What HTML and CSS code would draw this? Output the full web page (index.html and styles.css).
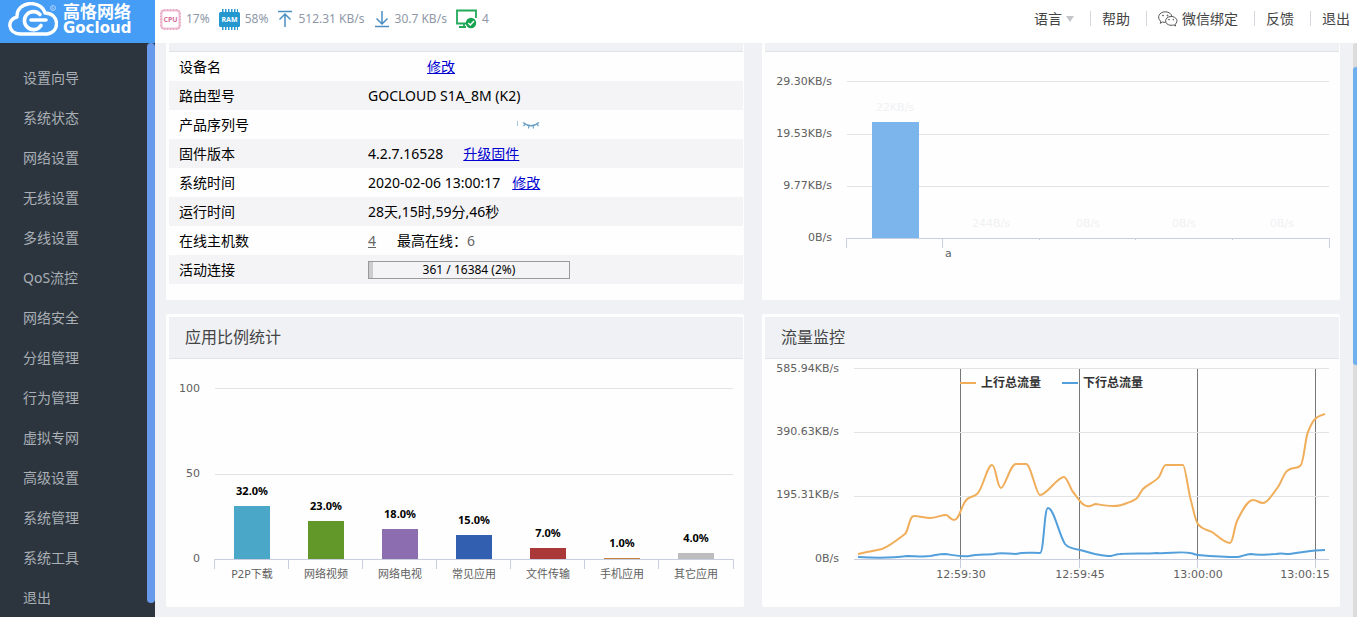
FILE: index.html
```html
<!DOCTYPE html>
<html lang="zh-CN">
<head>
<meta charset="utf-8">
<title>高恪网络</title>
<link rel="stylesheet" href="styles.css">
</head>
<body>
<header class="topbar">
  <div class="logo">
    <svg class="logo-mark" viewBox="0 0 50 36" width="50" height="36" aria-hidden="true">
      <path d="M12 32C-1 31-1 17 9 15C8-1 33-3 37 11C52 11 52 31 39 32Z" fill="none" stroke="#fff" stroke-width="3.4" stroke-linejoin="round"/>
      <path d="M32 12.500A9 9 0 1 0 33 23.500M23 18H38" fill="none" stroke="#fff" stroke-width="3.600" stroke-linecap="round"/>
      <circle cx="45" cy="6" r="2.500" fill="none" stroke="#a9d2fb" stroke-width="1"/>
      <path d="M44.300 7.500V5H45.500M45 6L46 7.500" fill="none" stroke="#a9d2fb" stroke-width=".7"/>
    </svg>
    <div class="logo-text"><span class="logo-cn">高恪网络</span><span class="logo-en">Gocloud</span></div>
  </div>
  <div class="stats">
    <span class="stat">
      <svg width="21" height="21" viewBox="0 0 21 21" aria-hidden="true">
        <rect x="1.500" y="1.500" width="18" height="18" rx="3" fill="#fff" stroke="#f0bfd4" stroke-width="2"/>
        <rect x=".8" y=".8" width="19.400" height="19.400" rx="3" fill="none" stroke="#dd8fb3" stroke-width="1" stroke-dasharray="1.500 1.500"/>
        <text class="chip cpu" x="10.500" y="13">CPU</text>
      </svg>17%</span>
    <span class="stat">
      <svg width="21" height="21" viewBox="0 0 21 21" aria-hidden="true">
        <path d="M3 1.500H19M3 19.500H19" stroke="#2a9ad0" stroke-width="3" stroke-dasharray="1.500 1.500"/>
        <rect y="3" width="21" height="15" rx="1.500" fill="#2497cf"/>
        <text class="chip ram" x="10.500" y="13">RAM</text>
      </svg>58%</span>
    <span class="stat">
      <svg width="16" height="18" viewBox="0 0 16 18" fill="none" stroke="#4b8fc2" stroke-width="1.500" aria-hidden="true"><path d="M1 1.500H15M8 17V4M2.500 9.500L8 4L13.500 9.500"/></svg>512.31 KB/s</span>
    <span class="stat">
      <svg width="16" height="18" viewBox="0 0 16 18" fill="none" stroke="#4b8fc2" stroke-width="1.500" aria-hidden="true"><path d="M1 16.500H15M8 1V14M2.500 8.500L8 14L13.500 8.500"/></svg>30.7 KB/s</span>
    <span class="stat">
      <svg width="21" height="20" viewBox="0 0 21 20" aria-hidden="true">
        <path d="M10 14.500H1V1.500H20V9M8 14.500V17M3 18H10" fill="none" stroke="#22a95a" stroke-width="1.800"/>
        <circle cx="15" cy="14" r="5.200" fill="#16a34f"/>
        <path d="M12.300 14L14.300 16L18 12" fill="none" stroke="#fff" stroke-width="1.400"/>
      </svg>4</span>
  </div>
  <nav class="links">
    <a href="#">语言<svg width="8" height="6" viewBox="0 0 8 6" aria-hidden="true"><path d="M0 0H8L4 6Z" fill="#c3c4c8"/></svg></a>
    <a href="#">帮助</a>
    <a href="#"><svg width="20" height="16" viewBox="0 0 20 16" fill="none" stroke="#555" stroke-width="1" aria-hidden="true">
      <path d="M7.500 11.300C6.500 11.500 5.400 11.300 4.500 11L2.300 12.300L2.700 10.200C-1.500 7 1 .8 7.300.8C11 .8 13.500 3 13.800 5.500"/>
      <path d="M13 5.500C6 5.700 5.700 14 13 14.300C14 14.400 15 14.200 15.700 13.900L17.600 15L17.200 13.200C20.800 10.400 18.600 5.500 13 5.500Z"/>
      <circle cx="5" cy="4.500" r=".5"/><circle cx="9.500" cy="4.500" r=".5"/><circle cx="11" cy="8.700" r=".4"/><circle cx="15.300" cy="8.700" r=".4"/>
    </svg>微信绑定</a>
    <a href="#">反馈</a>
    <a href="#">退出</a>
  </nav>
</header>
<div class="body">
  <aside class="sidebar">
    <nav class="menu">
      <a href="#">设置向导</a><a href="#">系统状态</a><a href="#">网络设置</a><a href="#">无线设置</a><a href="#">多线设置</a><a href="#">QoS流控</a><a href="#">网络安全</a><a href="#">分组管理</a><a href="#">行为管理</a><a href="#">虚拟专网</a><a href="#">高级设置</a><a href="#">系统管理</a><a href="#">系统工具</a><a href="#">退出</a>
    </nav>
    <div class="menu-track"><div class="menu-thumb"></div></div>
  </aside>
  <main class="content">
    <section class="panel cut">
      <div class="strip"></div>
      <table class="info">
        <tr><th scope="row">设备名</th><td><a class="after-name" href="#">修改</a></td></tr>
        <tr><th scope="row">路由型号</th><td>GOCLOUD S1A_8M (K2)</td></tr>
        <tr><th scope="row">产品序列号</th><td><button class="eye" aria-label="显示"><svg width="24" height="8" viewBox="0 0 24 8" fill="none" stroke="#6aa0c2" aria-hidden="true"><path d="M1.500 0V5" stroke="#a6c8dc"/><path d="M7 1.500Q15 8 23 1.500" stroke-width="1.500"/><path d="M9.500 3L7.500 5M13 4.500L12.500 7.500M17 4.500L17.500 7.500M20.500 3L22.500 5" stroke-width="1.200"/></svg></button></td></tr>
        <tr><th scope="row">固件版本</th><td>4.2.7.16528<a class="after-version" href="#">升级固件</a></td></tr>
        <tr><th scope="row">系统时间</th><td>2020-02-06 13:00:17<a class="after-time" href="#">修改</a></td></tr>
        <tr><th scope="row">运行时间</th><td>28天,15时,59分,46秒</td></tr>
        <tr><th scope="row">在线主机数</th><td><a class="hosts" href="#">4</a><span class="peak">最高在线：</span><span class="muted">6</span></td></tr>
        <tr><th scope="row">活动连接</th><td><div class="meter"><div class="meter-fill"></div><span class="meter-text">361 / 16384 (2%)</span></div></td></tr>
      </table>
    </section>
    <section class="panel cut">
      <div class="strip"></div>
      <svg class="chart" viewBox="0 0 574 245" role="img" aria-label="流量">
        <path class="grid" d="M82 29.500H564M82 82.500H564M82 134.500H564"/>
        <rect x="107" y="70" width="47" height="116" fill="#7cb5ec"/>
        <path class="axis" d="M81.500 196V186.500H564.500V196M177.500 186V196M274.500 186V188M370.500 186V188M467.500 186V188"/>
        <g class="end"><text x="67" y="33">29.30KB/s</text><text x="67" y="85">19.53KB/s</text><text x="67" y="137">9.77KB/s</text><text x="67" y="189">0B/s</text></g>
        <text x="180" y="205">a</text>
        <g class="mid faint"><text x="130" y="59">22KB/s</text><text x="226" y="175">244B/s</text><text x="323" y="175">0B/s</text><text x="419" y="175">0B/s</text><text x="517" y="175">0B/s</text></g>
      </svg>
    </section>
    <section class="panel">
      <h2>应用比例统计</h2>
      <svg class="chart" viewBox="0 0 574 245" role="img" aria-label="应用比例统计">
        <path class="grid" d="M46 29.500H564M46 115.500H564"/>
        <rect x="65" y="147" width="36" height="53" fill="#4ba7c7"/>
        <rect x="139" y="162" width="36" height="38" fill="#629829"/>
        <rect x="213" y="170" width="36" height="30" fill="#8c6eb0"/>
        <rect x="287" y="176" width="36" height="24" fill="#325fb0"/>
        <rect x="361" y="189" width="36" height="11" fill="#aa3838"/>
        <rect x="435" y="199" width="36" height="1" fill="#c4813e"/>
        <rect x="509" y="194" width="36" height="6" fill="#bdbdbd"/>
        <path class="axis" d="M45.500 210V200.500H564.500V210M119.500 200V210M193.500 200V210M267.500 200V210M341.500 200V210M415.500 200V210M489.500 200V210"/>
        <g class="end"><text x="31" y="33">100</text><text x="31" y="118">50</text><text x="31" y="203">0</text></g>
        <g class="mid value"><text x="83" y="136">32.0%</text><text x="157" y="151">23.0%</text><text x="231" y="159">18.0%</text><text x="305" y="165">15.0%</text><text x="379" y="178">7.0%</text><text x="453" y="188">1.0%</text><text x="527" y="183">4.0%</text></g>
        <g class="mid name"><text x="83" y="219">P2P下载</text><text x="157" y="219">网络视频</text><text x="231" y="219">网络电视</text><text x="305" y="219">常见应用</text><text x="379" y="219">文件传输</text><text x="453" y="219">手机应用</text><text x="527" y="219">其它应用</text></g>
      </svg>
    </section>
    <section class="panel">
      <h2>流量监控</h2>
      <svg class="chart" viewBox="0 0 574 245" role="img" aria-label="流量监控">
        <path d="M195.500 10V200M314.500 10V200M432.500 10V200M550.500 10V200" stroke="#777"/>
        <path class="grid" d="M89 9.500H564M89 73.500H564M89 137.500H564"/>
        <path class="axis" d="M89 200.500H564M195.500 200V209M314.500 200V209M432.500 200V209M550.500 200V209"/>
        <g class="end"><text x="74" y="13">585.94KB/s</text><text x="74" y="76">390.63KB/s</text><text x="74" y="139">195.31KB/s</text><text x="74" y="203">0B/s</text></g>
        <g class="mid"><text x="196" y="219">12:59:30</text><text x="315" y="219">12:59:45</text><text x="433" y="219">13:00:00</text><text x="540" y="219">13:00:15</text></g>
        <g fill="none" stroke-width="2" stroke-linejoin="round">
          <path stroke="#f0ad5a" d="M93 195C101 193 108 192 117 190C125 187 132 181 140 175C144 171 144 157 149 157C154 157 160 159 165 159C171 159 176 156 181 156C184 156 185 161 189 161C196 161 196 140 206 138C209 137 210 137 212 135C218 130 222 106 227 106C231 106 232 129 236 129C240 129 245 105 251 105H261C266 105 271 136 275 136C282 136 292 118 299 118C302 118 305 129 308 133C313 139 317 147 322 147C326 148 328 145 331 145C337 146 342 147 348 147C353 147 358 146 362 144C365 143 369 142 372 139C374 137 376 132 378 130C383 125 390 123 394 118C397 113 398 106 401 106H418C420 106 423 129 425 138C428 148 430 162 433 165C436 170 443 171 447 173C452 176 459 184 465 184C468 184 469 169 472 162C476 154 482 141 488 141C492 141 494 144 498 144C503 144 509 133 513 128C516 124 519 114 522 112C526 108 532 110 535 107C539 105 540 79 543 73C545 68 548 62 550 60C553 57 557 56 560 55"/>
          <path stroke="#529fdb" d="M93 198C110 199 128 199 142 197C150 197 158 198 165 197C171 196 175 195 180 195C188 196 196 198 204 197C213 195 222 196 229 195C236 193 243 195 251 195C258 193 266 194 275 194C279 194 279 149 283 149C289 149 294 176 300 185C303 189 309 190 315 191C320 192 325 194 330 195C336 196 341 197 346 197C350 196 352 195 355 195C368 194 380 195 392 194C402 195 415 192 425 194C428 194 430 196 433 196C445 197 460 198 473 198C478 197 481 195 486 195C495 197 503 195 511 195C515 194 519 195 524 195C535 194 547 191 560 191"/>
          <path stroke="#f0ad5a" d="M195 24H211"/><path stroke="#529fdb" d="M297 24H313"/>
        </g>
        <g class="legend"><text x="216" y="28">上行总流量</text><text x="318" y="28">下行总流量</text></g>
      </svg>
    </section>
  </main>
  <div class="page-track"><div class="page-thumb"></div></div>
</div>
</body>
</html>
```
FILE: styles.css
```css
* { box-sizing: border-box; }
body {
  margin: 0;
  height: 100vh;
  overflow: hidden;
  display: flex;
  flex-direction: column;
  background: #eff1f5;
  color: #000;
  font: 14px/20px "Noto Sans", "Noto Sans CJK SC", sans-serif;
}
svg { flex: none; }

.topbar {
  flex: none;
  height: 43px;
  display: flex;
  align-items: center;
  background: #fff;
}
.logo {
  width: 155px;
  height: 43px;
  padding: 2px 0 0 8px;
  display: flex;
  gap: 5px;
  background: #459df5;
  color: #fff;
}
.logo-text { display: flex; flex-direction: column; font-weight: bold; }
.logo-cn { font: bold 17px/18px "Noto Sans CJK SC", sans-serif; }
.logo-en { font: bold 15px/16px "DejaVu Sans", sans-serif; }

.stats {
  display: flex;
  align-items: center;
  gap: 9px;
  padding: 0 0 5px 5px;
  color: #8f98a8;
  font-size: 12px;
}
.stat { display: flex; align-items: center; gap: 5px; white-space: nowrap; }
.chip { font: bold 7px "Open Sans", sans-serif; text-anchor: middle; }
.cpu { fill: #d6709f; }
.ram { fill: #fff; }

.links { margin-left: auto; display: flex; padding-bottom: 6px; }
.links a {
  display: flex;
  align-items: center;
  gap: 4px;
  height: 15px;
  padding: 0 16px 0 11px;
  border-left: 1px solid #d5d7dc;
  color: #444;
  text-decoration: none;
  white-space: nowrap;
}
.links a:first-child { border-left: 0; }
.links a:last-child { padding-right: 7px; }

.body { flex: 1; min-height: 0; display: flex; }
.sidebar { width: 155px; flex: none; display: flex; background: #2c353e; }
.menu { flex: 1; padding-top: 15px; display: flex; flex-direction: column; }
.menu a {
  height: 40px;
  flex: none;
  padding-left: 23px;
  line-height: 40px;
  color: #a9afb5;
  text-decoration: none;
}
.menu-track { width: 8px; padding-bottom: 14px; }
.menu-thumb { height: 100%; border-radius: 4px; background: #689aeb; }

.content {
  flex: 1;
  min-width: 0;
  padding: 0 13px 0 11px;
  display: grid;
  grid-template-columns: 1fr 1fr;
  column-gap: 18px;
  row-gap: 14px;
  align-content: start;
}
.panel { background: #fefefe; border-radius: 2px; padding: 3px 1px 3px 3px; }
.cut { padding-top: 0; }
.strip { height: 9px; background: #eff1f5; border-bottom: 1px solid #e1e3e8; }
.panel h2 {
  margin: 0;
  height: 42px;
  padding-left: 16px;
  border-bottom: 1px solid #e1e3e8;
  background: #eff1f5;
  color: #444;
  font-size: 16px;
  font-weight: normal;
  line-height: 41px;
}

.info { width: 100%; border-collapse: collapse; table-layout: fixed; }
.info th, .info td { height: 29px; padding: 0; text-align: left; font-weight: normal; white-space: nowrap; }
.info th { width: 199px; padding-left: 10px; }
.info tr:nth-child(even) { background: #f4f4f6; }
.info a { color: #0000d0; }
.after-name { margin-left: 59px; }
.after-version { margin-left: 20px; }
.after-time { margin-left: 12px; }
.info .hosts, .muted { color: #666; }
.peak { margin-left: 21px; }
.eye { display: block; margin-left: 148px; padding: 0; border: 0; background: none; line-height: 0; }
.meter {
  display: flex;
  width: 202px;
  height: 18px;
  border: 1px solid #999;
  font-size: 12px;
  line-height: 16px;
}
.meter-fill { width: 2%; min-width: 4px; background: #ccc; }
.meter-text { flex: 1; padding-right: 4px; text-align: center; }

.chart { display: block; width: 100%; height: auto; }
.chart text { font: 11px "DejaVu Sans", "Noto Sans CJK SC", sans-serif; fill: #606060; }
.chart .end text { text-anchor: end; }
.chart .mid text { text-anchor: middle; }
.chart .name text { font-family: "Noto Sans", "Noto Sans CJK SC", sans-serif; }
.chart .value text { font: bold 11px "Noto Sans", sans-serif; fill: #000; }
.chart .faint text { fill: #f0f1f3; }
.chart .legend text { font: bold 12px "Noto Sans CJK SC", sans-serif; fill: #333; }
.grid { fill: none; stroke: #e1e3e6; }
.axis { fill: none; stroke: #c8cedd; }

.page-track { width: 4px; flex: none; background: #dcdcdc; padding-top: 24px; border-radius: 3px 0 0 0; }
.page-thumb { height: 298px; border-radius: 3px 0 0 3px; background: #70b0ee; }
```
